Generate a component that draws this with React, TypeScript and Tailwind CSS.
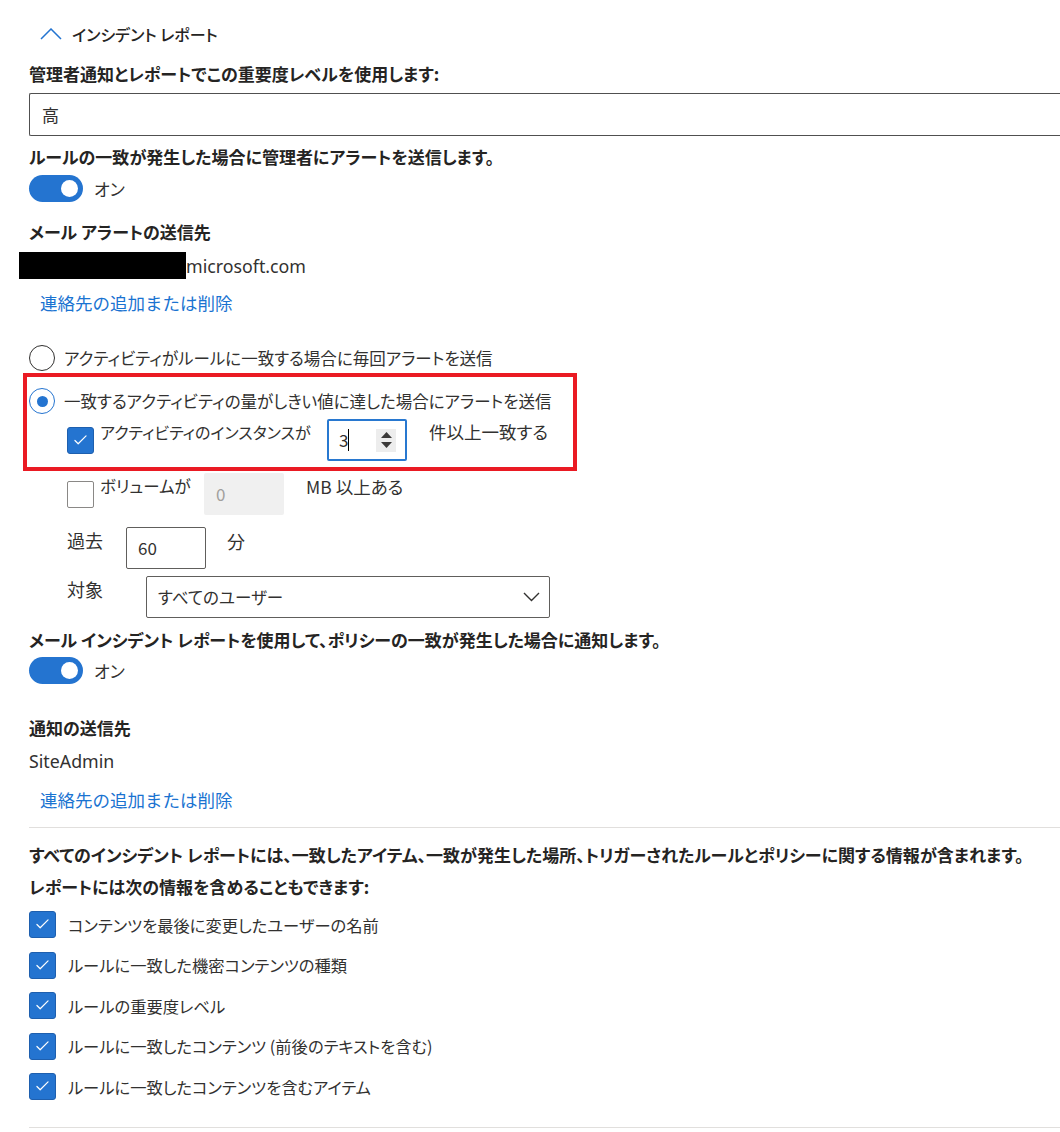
import React from 'react'

const BLUE = '#2474d0'

function Toggle() {
  return (
    <div className="flex h-[27px] items-center">
      <div className="flex h-[27px] w-[54px] items-center justify-end rounded-full bg-[#2474d0] pr-[5px]">
        <div className="h-[17px] w-[17px] rounded-full bg-white" />
      </div>
      <span className="ml-[11px] text-[17px] leading-[24px]">オン</span>
    </div>
  )
}

function CheckBox({ checked = true }: { checked?: boolean }) {
  if (!checked) {
    return <div className="h-[27px] w-[27px] shrink-0 rounded-[2px] border border-[#8a8886] bg-white" />
  }
  return (
    <div className="flex h-[27px] w-[27px] shrink-0 items-center justify-center rounded-[3px] border border-[#1e5fae] bg-[#2474d0]">
      <svg width="27" height="27" viewBox="0 0 27 27" fill="none">
        <path d="M7.5 13.5 L11 17 L19.5 8.5" stroke="white" strokeWidth="1.3" strokeLinecap="round" strokeLinejoin="round" />
      </svg>
    </div>
  )
}

function Radio({ checked = false }: { checked?: boolean }) {
  return (
    <div
      className={
        checked
          ? 'flex h-[26px] w-[26px] shrink-0 items-center justify-center rounded-full border border-[#2474d0]'
          : 'h-[26px] w-[26px] shrink-0 rounded-full border border-[#323130]'
      }
    >
      {checked && <div className="h-[11px] w-[11px] rounded-full bg-[#2474d0]" />}
    </div>
  )
}

function Label({ children, className = '' }: { children: React.ReactNode; className?: string }) {
  return <div className={'text-[17px] font-semibold leading-[24px] text-[#252423] ' + className}>{children}</div>
}

function Link({ className = '' }: { className?: string }) {
  return (
    <div className={'ml-[11px] text-[17.5px] leading-[24px] text-[#1a73d1] [font-feature-settings:normal] ' + className}>
      連絡先の追加または削除
    </div>
  )
}

const reportItems = [
  'コンテンツを最後に変更したユーザーの名前',
  'ルールに一致した機密コンテンツの種類',
  'ルールの重要度レベル',
  'ルールに一致したコンテンツ (前後のテキストを含む)',
  'ルールに一致したコンテンツを含むアイテム',
]

export default function App() {
  return (
    <div
      className="h-[1132px] w-[1060px] overflow-hidden bg-white pl-[29px] text-[#323130] [font-family:'Noto_Sans_CJK_JP','Noto_Sans',sans-serif] [font-feature-settings:'palt']"
    >
      {/* section header */}
      <div className="mt-[21px] flex h-[26px] items-center">
        <svg className="ml-[11px]" width="22" height="12" viewBox="0 0 22 12" fill="none">
          <path d="M1 11 L11 1 L21 11" stroke={BLUE} strokeWidth="1.5" />
        </svg>
        <span className="ml-[10px] text-[16px] font-medium leading-[24px] text-[#252423]">インシデント レポート</span>
      </div>

      <Label className="mt-[15px]">管理者通知とレポートでこの重要度レベルを使用します:</Label>
      <div className="mt-[7px] flex h-[43px] w-full items-center rounded-l-[2px] border border-r-0 border-[#505050] pl-[12px] text-[17px]">
        高
      </div>

      <Label className="mt-[9px]">ルールの一致が発生した場合に管理者にアラートを送信します。</Label>
      <div className="mt-[6px]">
        <Toggle />
      </div>

      <Label className="mt-[18px]">メール アラートの送信先</Label>
      <div className="mt-[8px] flex h-[27px] items-center">
        <div className="ml-[-10px] h-[27px] w-[167px] bg-black" />
        <span className="text-[17.8px] leading-[24px] [font-family:'Noto_Sans',sans-serif]">microsoft.com</span>
      </div>
      <Link className="mt-[12px]" />

      {/* alert trigger */}
      <div className="mt-[30px] flex h-[26px] items-center">
        <Radio />
        <span className="ml-[9px] text-[16.5px] leading-[24px]">アクティビティがルールに一致する場合に毎回アラートを送信</span>
      </div>

      <div className="relative mt-[17px]">
        <div className="flex h-[26px] items-center">
          <Radio checked />
          <span className="ml-[9px] text-[16.5px] leading-[24px]">一致するアクティビティの量がしきい値に達した場合にアラートを送信</span>
        </div>
        <div className="mt-[5px] flex h-[42px] items-start pl-[38px]">
          <div className="mt-[8px]">
            <CheckBox />
          </div>
          <span className="ml-[6px] mt-[1px] w-[227px] shrink-0 text-[16px] leading-[24px]">アクティビティのインスタンスが</span>
          <div className="flex h-[42px] w-[80px] shrink-0 items-center rounded-[2px] border-2 border-[#2878d0] pl-[10px]">
            <span className="text-[17px] leading-[24px]">3</span>
            <span className="h-[22px] w-px bg-black" />
            <div className="ml-auto mr-[9px] flex h-[23px] w-[20px] flex-col items-center justify-center gap-[4px] bg-[#ededed]">
              <svg width="11" height="6" viewBox="0 0 11 6">
                <path d="M0 6 L5.5 0 L11 6 Z" fill="#3b3a39" />
              </svg>
              <svg width="11" height="6" viewBox="0 0 11 6">
                <path d="M0 0 L5.5 6 L11 0 Z" fill="#3b3a39" />
              </svg>
            </div>
          </div>
          <span className="ml-[22px] mt-[1px] text-[17.5px] leading-[24px]">件以上一致する</span>
        </div>
        <div className="pointer-events-none absolute left-[-6px] top-[-15px] h-[98px] w-[554px] border-4 border-[#ea1a23]" />
      </div>

      <div className="mt-[12px] flex h-[42px] items-start pl-[38px]">
        <div className="mt-[8px]">
          <CheckBox checked={false} />
        </div>
        <span className="ml-[6px] mt-[1px] w-[104px] shrink-0 text-[16.5px] leading-[24px]">ボリュームが</span>
        <div className="flex h-[42px] w-[80px] shrink-0 items-center rounded-[2px] bg-[#f0f0f0] pl-[12px] text-[17px] text-[#a19f9d]">
          0
        </div>
        <span className="ml-[22px] mt-[2px] text-[17.5px] leading-[24px]">MB 以上ある</span>
      </div>

      <div className="mt-[12px] flex h-[42px] items-start pl-[38px]">
        <span className="mt-[1px] w-[59px] shrink-0 text-[18px] leading-[24px]">過去</span>
        <div className="flex h-[42px] w-[80px] shrink-0 items-center rounded-[2px] border border-[#605e5c] pl-[11px] text-[17px]">
          60
        </div>
        <span className="ml-[21px] mt-[2px] text-[18px] leading-[24px]">分</span>
      </div>

      <div className="mt-[7px] flex h-[42px] items-start pl-[38px]">
        <span className="mt-[1px] w-[79px] shrink-0 text-[18px] leading-[24px]">対象</span>
        <div className="flex h-[42px] w-[404px] shrink-0 items-center justify-between rounded-[2px] border border-[#605e5c] pl-[11px] pr-[9px] text-[16.5px]">
          <span>すべてのユーザー</span>
          <svg width="17" height="10" viewBox="0 0 17 10" fill="none">
            <path d="M1 1 L8.5 8.5 L16 1" stroke="#323130" strokeWidth="1.4" />
          </svg>
        </div>
      </div>

      <Label className="mt-[10px]">メール インシデント レポートを使用して、ポリシーの一致が発生した場合に通知します。</Label>
      <div className="mt-[5px]">
        <Toggle />
      </div>

      <Label className="mt-[32px]">通知の送信先</Label>
      <div className="mt-[9px] text-[17.8px] leading-[24px] [font-family:'Noto_Sans',sans-serif]">SiteAdmin</div>
      <Link className="mt-[15px]" />

      <div className="mt-[15px] h-px w-full bg-[#e1dfdd]" />

      <Label className="mt-[15px]">
        すべてのインシデント レポートには、一致したアイテム、一致が発生した場所、トリガーされたルールとポリシーに関する情報が含まれます。
      </Label>
      <Label className="mt-[8px]">レポートには次の情報を含めることもできます:</Label>

      <div className="mt-[12px] flex flex-col gap-[13.5px]">
        {reportItems.map((item) => (
          <div key={item} className="flex h-[27px] items-center">
            <CheckBox />
            <span className="ml-[12px] text-[16.3px] leading-[24px]">{item}</span>
          </div>
        ))}
      </div>

      <div className="mt-[27px] h-px w-full bg-[#e1dfdd]" />
    </div>
  )
}
